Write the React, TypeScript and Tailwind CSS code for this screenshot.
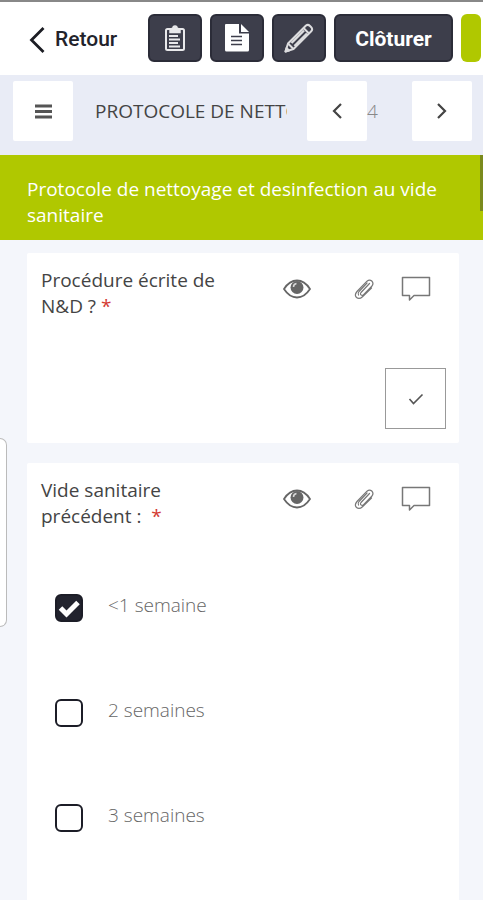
import React, { useState } from 'react';

interface Question {
  id: string;
  title: string;
  type: 'confirm' | 'choices';
  choices?: string[];
}

const questions: Question[] = [
  { id: 'procedure', title: 'Procédure écrite de N&D ?', type: 'confirm' },
  {
    id: 'vide',
    title: 'Vide sanitaire précédent :\u00a0',
    type: 'choices',
    choices: ['<1 semaine', '2 semaines', '3 semaines'],
  },
];

const ClipboardIcon = () => (
  <svg width="22" height="28" viewBox="0 0 22 28" fill="none" stroke="#e9e9eb" strokeWidth="2">
    <rect x="2" y="5" width="18" height="21" rx="1.5" />
    <path d="M6 8.500V5.500l3-1.500a2 2 0 0 1 4 0l3 1.500v3z" fill="#e9e9eb" strokeWidth="1.500" />
    <path d="M5 12h9M5 15.500h11M5 19h9M5 22.500h11" strokeWidth="2" />
  </svg>
);

const DocumentIcon = () => (
  <svg width="26" height="28" viewBox="0 0 26 28">
    <path d="M2 0h13v9.500h10V26a1.500 1.500 0 0 1-1.500 1.500h-21A1.500 1.500 0 0 1 1 26V1a1 1 0 0 1 1-1z" fill="#fff" />
    <path d="M17 0l8 8h-8z" fill="#fff" />
    <path d="M7 12.500h11M7 16.500h11M7 20.500h11" stroke="#3d3e4b" strokeWidth="1.600" />
  </svg>
);

const PencilIcon = () => (
  <svg width="30" height="30" viewBox="0 0 30 30" fill="none" stroke="#dcdcde" strokeWidth="2" strokeLinejoin="round">
    <path d="M1.500 28.500l2.500-8L22 2.500q2-1.500 4 .5l1 1q2 2 .5 4L9.500 26z" />
    <path d="M4 20.500l5.500 5.500M19.500 5l5.500 5.500" />
    <path d="M7.500 20L20 7.500M10.500 23L23 10.500" strokeWidth="2.400" />
    <path d="M1.500 28.500l1-3.500 2.500 2.500z" fill="#dcdcde" />
  </svg>
);

const EyeIcon = () => (
  <svg width="28" height="20" viewBox="0 0 28 20" fill="none" stroke="#666" strokeWidth="1.800">
    <path d="M1 10Q6.500 1.500 14 1.500T27 10Q21.500 18.500 14 18.500T1 10z" />
    <circle cx="14" cy="8.500" r="6.500" fill="#666" stroke="none" />
    <path d="M10.500 8q0-3 3-3.500" stroke="#d8d8d8" strokeWidth="1.500" />
  </svg>
);

const ClipIcon = () => (
  <svg width="20" height="22" viewBox="0 0 20 22" fill="none" stroke="#777" strokeWidth="1.200" strokeLinecap="round">
    <path d="M15.500 5.500L7 14.500q-1.200 1.600.2 2.600 1.200.7 2.400-.5L18 8q2-2.800-.2-5-2.300-2-4.800.2L3 13.500q-3 3.500-.5 6 2.800 2.200 6-.8L17.500 10" />
    <path d="M13 5L5 13.500q-1.500 2-.5 3.500" />
  </svg>
);

const CommentIcon = () => (
  <svg width="30" height="26" viewBox="0 0 30 26" fill="none" stroke="#777" strokeWidth="1.500" strokeLinejoin="round">
    <path d="M1.500 1.500h27v18H13l-4.500 4.500v-4.500h-7z" />
  </svg>
);

const ActionButton = ({ label, children }: { label: string; children: React.ReactNode }) => (
  <button
    aria-label={label}
    className="flex h-12 w-[54px] shrink-0 items-center justify-center rounded-md border-2 border-[#2b2c38] bg-[#3d3e4b]"
  >
    {children}
  </button>
);

const NavButton = ({ label, path }: { label: string; path: string }) => (
  <button aria-label={label} className="flex size-15 shrink-0 items-center justify-center rounded-xs bg-white">
    <svg width="12" height="16" viewBox="0 0 12 16" fill="none" stroke="#444" strokeWidth="2.200">
      <path d={path} />
    </svg>
  </button>
);

const Choice = ({ id, label, defaultChecked }: { id: string; label: string; defaultChecked: boolean }) => {
  const [checked, setChecked] = useState(defaultChecked);

  return (
    <div className="flex h-[105px] items-start gap-[25px]">
      <span className="relative mt-0.5 size-7 shrink-0">
        <input
          id={id}
          type="checkbox"
          checked={checked}
          onChange={(e) => setChecked(e.target.checked)}
          className="block size-7 appearance-none rounded-md border-2 border-[#1c1d27] bg-white checked:bg-[#22232e]"
        />
        {checked && (
          <svg className="pointer-events-none absolute inset-0" width="28" height="28" viewBox="0 0 28 28" fill="none">
            <path d="M5.500 14l6 6L23 8.500" stroke="#fff" strokeWidth="5" />
          </svg>
        )}
      </span>
      <label htmlFor={id} className="text-[19px] leading-[26px] font-light text-[#666]">
        {label}
      </label>
    </div>
  );
};

const QuestionCard = ({ question }: { question: Question }) => {
  const [confirmed, setConfirmed] = useState(true);

  return (
    <section
      className={`rounded-xs bg-white pt-3.5 pr-[13px] pl-3.5 ${question.type === 'choices' ? 'flex-1' : 'pb-3.5'}`}
    >
      <div className="flex items-start justify-between">
        <h2 className="w-48 text-[19px] leading-[26px] text-[#444]">
          {question.title} <span className="text-[#d33a32]">*</span>
        </h2>
        <div className="mt-2 flex h-7 items-center pr-[15px]">
          <button aria-label="Aperçu" className="mr-[43px]">
            <EyeIcon />
          </button>
          <button aria-label="Pièce jointe" className="mr-[27px]">
            <ClipIcon />
          </button>
          <button aria-label="Commentaire">
            <CommentIcon />
          </button>
        </div>
      </div>

      {question.type === 'confirm' && (
        <div className="mt-[49px] flex justify-end">
          <button
            aria-label="Valider"
            aria-pressed={confirmed}
            onClick={() => setConfirmed(!confirmed)}
            className="flex size-[61px] items-center justify-center border border-[#999]"
          >
            {confirmed && (
              <svg width="16" height="12" viewBox="0 0 16 12" fill="none" stroke="#555" strokeWidth="1.600">
                <path d="M1.500 6l4 4.500L14.500 1.500" />
              </svg>
            )}
          </button>
        </div>
      )}

      {question.choices && (
        <div className="mt-[63px] pl-3.5">
          {question.choices.map((choice, i) => (
            <Choice key={choice} id={`${question.id}-${i}`} label={choice} defaultChecked={i === 0} />
          ))}
        </div>
      )}
    </section>
  );
};

const App = () => {
  return (
    <div className="relative flex min-h-screen flex-col overflow-hidden bg-[#f4f6fb] font-['Open_Sans',sans-serif]">
      {/* Top actions */}
      <header className="flex h-[75px] items-center gap-2 border-t-2 border-[#888] bg-white pb-0.5 pl-7 font-['Roboto',sans-serif]">
        <button className="mr-auto flex items-center gap-2.5 pt-1 text-[21px] font-medium text-[#22232b]">
          <svg width="17" height="28" viewBox="0 0 17 28" fill="none" stroke="#1c1d24" strokeWidth="2.800">
            <path d="M15.500 2L3.500 14l12 12" />
          </svg>
          Retour
        </button>
        <ActionButton label="Liste">
          <ClipboardIcon />
        </ActionButton>
        <ActionButton label="Document">
          <DocumentIcon />
        </ActionButton>
        <ActionButton label="Modifier">
          <PencilIcon />
        </ActionButton>
        <button className="h-12 w-[119px] shrink-0 rounded-md border-2 border-[#2b2c38] bg-[#3d3e4b] pt-1 text-[21px] font-bold text-white">
          Clôturer
        </button>
        <button aria-label="Plus" className="mr-0.5 h-12 w-5 shrink-0 rounded-md bg-[#b0c800]" />
      </header>

      {/* Section navigation */}
      <nav className="flex h-20 items-start bg-[#e9ecf6] pt-1.5 pr-[11px] pl-[13px]">
        <button aria-label="Menu" className="flex size-15 shrink-0 items-center justify-center rounded-xs bg-white">
          <svg width="17" height="15" viewBox="0 0 17 15" stroke="#555" strokeWidth="3">
            <path d="M0 2h17M0 7.500h17M0 13h17" />
          </svg>
        </button>
        <h1 className="mr-5 ml-[22px] min-w-0 flex-1 overflow-hidden text-[19px] leading-[60px] whitespace-nowrap text-[#444]">
          PROTOCOLE DE NETTOYAGE
        </h1>
        <NavButton label="Précédent" path="M10 1L3 8l7 7" />
        <span className="w-[45px] text-[19px] leading-[60px] font-light text-[#888]">4</span>
        <NavButton label="Suivant" path="M2 1l7 7-7 7" />
      </nav>

      <div className="relative bg-[#b0c800] px-[27px] pt-[21px] pb-3">
        <p className="text-[19px] leading-[26px] text-white">
          Protocole de nettoyage et desinfection au vide sanitaire
        </p>
        <span className="absolute top-0 right-0 h-14 w-[3px] bg-[#7a8a1c]" />
      </div>

      <main className="flex flex-1 flex-col gap-5 pt-[13px] pr-6 pl-[27px]">
        {questions.map((question) => (
          <QuestionCard key={question.id} question={question} />
        ))}
      </main>

      {/* Side drawer handle */}
      <span className="absolute top-[438px] left-0 h-[189px] w-[7px] rounded-r-lg border border-l-0 border-[#bbb] bg-white" />
    </div>
  );
};

export default App;
